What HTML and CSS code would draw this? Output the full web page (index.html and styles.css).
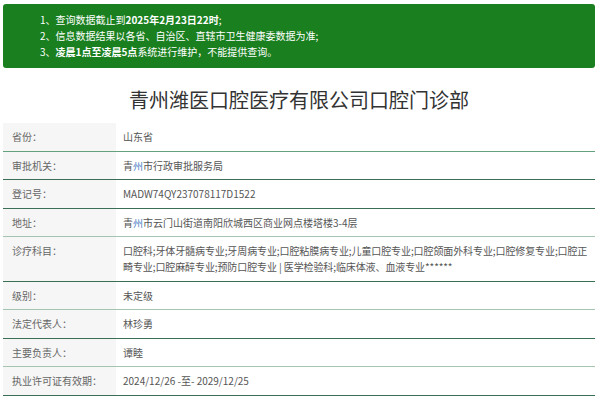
FILE: index.html
```html
<!DOCTYPE html>
<html lang="zh-CN">
<head>
<meta charset="utf-8">
<link rel="stylesheet" href="styles.css">
</head>
<body>
<div class="page">
  <div class="notice">
    <p>1、查询数据截止到<b>2025年2月23日22时</b>;</p>
    <p>2、信息数据结果以各省、自治区、直辖市卫生健康委数据为准;</p>
    <p>3、<b>凌晨1点至凌晨5点</b>系统进行维护，不能提供查询。</p>
  </div>
  <h1 class="title">青州潍医口腔医疗有限公司口腔门诊部</h1>
  <div class="table">
    <div class="row b-mid"><div class="label">省份：</div><div class="value">山东省</div></div>
    <div class="row b-dark"><div class="label">审批机关：</div><div class="value">青<span class="hl">州</span>市行政审批服务局</div></div>
    <div class="row b-dark"><div class="label">登记号：</div><div class="value">MADW74QY237078117D1522</div></div>
    <div class="row b-light"><div class="label">地址：</div><div class="value">青<span class="hl">州</span>市云门山街道南阳欣城西区商业网点楼塔楼3-4层</div></div>
    <div class="row b-dark"><div class="label">诊疗科目：</div><div class="value tight">口腔科;牙体牙髓病专业;牙周病专业;口腔粘膜病专业;儿童口腔专业;口腔颌面外科专业;口腔修复专业;口腔正畸专业;口腔麻醉专业;预防口腔专业 | 医学检验科;临床体液、血液专业******</div></div>
    <div class="row b-light"><div class="label">级别：</div><div class="value">未定级</div></div>
    <div class="row b-dark"><div class="label">法定代表人：</div><div class="value">林珍勇</div></div>
    <div class="row b-light"><div class="label">主要负责人：</div><div class="value">谭睦</div></div>
    <div class="row b-dark"><div class="label">执业许可证有效期：</div><div class="value">2024/12/26 -至- 2029/12/25</div></div>
  </div>
</div>
</body>
</html>
```
FILE: styles.css
```css
* { box-sizing: border-box; }
html, body { margin: 0; padding: 0; background: #fff; }
body {
  font-family: "Noto Sans CJK SC", "Noto Sans", "Liberation Sans", sans-serif;
  color: #666;
}
.page {
  padding: 4px 5px 0 3px;
}
.notice {
  background: #1a7f1f;
  border-radius: 3px;
  padding: 8px 0 8px 37px;
  color: #fff;
  font-size: 10px;
  line-height: 16px;
}
.notice p { margin: 0; }
.notice b { font-weight: 700; }
.title {
  margin: 17px 0 8px;
  text-align: center;
  font-size: 20px;
  line-height: 30px;
  font-weight: 400;
  color: #333;
}
.table {
  font-size: 10px;
  line-height: 16px;
}
.row {
  display: flex;
  border-bottom: 1px solid #3a6e55;
}
.row.b-mid { border-bottom-color: #64a27d; }
.row.b-dark { border-bottom-color: #3a6e55; }
.row.b-light { border-bottom-color: #a6c4b2; }
.label {
  flex: 0 0 113px;
  background: #f6f6f6;
  padding: 6px 0 5.5px 9px;
  color: #666;
}
.value {
  flex: 1;
  padding: 6px 2px 5.5px 7px;
  color: #555;
}
.value.tight { letter-spacing: -0.1px; }
.hl { color: #4a7fc4; }
```
